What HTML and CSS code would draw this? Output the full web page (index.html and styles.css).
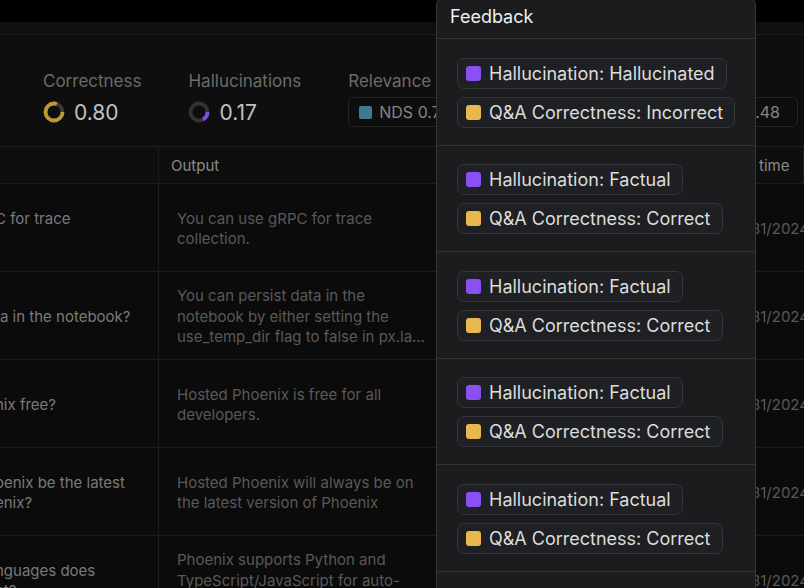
FILE: index.html
```html
<!DOCTYPE html>
<html lang="en">
<head>
<meta charset="utf-8">
<title>Traces - Feedback</title>
<link rel="stylesheet" href="styles.css">
</head>
<body>
<div class="app">
  <div class="topbar"></div>
  <div class="subbar"></div>

  <div class="metrics">
    <div class="metric">
      <div class="metric-label">Correctness</div>
      <div class="metric-value">
        <svg class="donut" width="22" height="22" viewBox="0 0 22 22">
          <circle cx="11" cy="11" r="8.5" fill="none" stroke="#3a3a3a" stroke-width="3.8"/>
          <circle cx="11" cy="11" r="8.5" fill="none" stroke="#bf982f" stroke-width="3.8" stroke-dasharray="42.7 53.4"/>
        </svg>
        <span>0.80</span>
      </div>
    </div>
    <div class="metric">
      <div class="metric-label">Hallucinations</div>
      <div class="metric-value">
        <svg class="donut" width="22" height="22" viewBox="0 0 22 22">
          <circle cx="11" cy="11" r="8.5" fill="none" stroke="#333333" stroke-width="3.8"/>
          <circle cx="11" cy="11" r="8.5" fill="none" stroke="#7d4fdc" stroke-width="3.8" stroke-dasharray="9.1 53.4"/>
        </svg>
        <span>0.17</span>
      </div>
    </div>
    <div class="metric grow">
      <div class="metric-label">Relevance</div>
      <div class="metric-value badges">
        <div class="stat"><span class="sq"></span>NDS 0.72</div>
        <div class="stat"><span class="sq"></span>Precision 0.48</div>
      </div>
    </div>
  </div>

  <div class="table">
    <div class="row head">
      <div class="cell q-head"></div>
      <div class="cell">Output</div>
      <div class="cell">Feedback</div>
      <div class="cell">Start time</div>
    </div>
    <div class="row">
      <div class="cell q"><div class="frag">C for trace<br>&nbsp;</div></div>
      <div class="cell"><div class="out">You can use gRPC for trace collection.</div></div>
      <div class="cell"></div>
      <div class="cell date">05/31/2024, 10:12 AM</div>
    </div>
    <div class="row">
      <div class="cell q"><div class="frag">ta in the notebook?</div></div>
      <div class="cell">
        <div class="lines">
          <div>You can persist data in the</div>
          <div>notebook by either setting the</div>
          <div class="clip">use_temp_dir flag to false in px.launch_app</div>
        </div>
      </div>
      <div class="cell"></div>
      <div class="cell date">05/31/2024, 10:12 AM</div>
    </div>
    <div class="row">
      <div class="cell q"><div class="frag">nix free?</div></div>
      <div class="cell"><div class="out">Hosted Phoenix is free for all developers.</div></div>
      <div class="cell"></div>
      <div class="cell date">05/31/2024, 10:12 AM</div>
    </div>
    <div class="row">
      <div class="cell q"><div class="frag">oenix be the latest<br>enix?</div></div>
      <div class="cell"><div class="out">Hosted Phoenix will always be on the latest version of Phoenix</div></div>
      <div class="cell"></div>
      <div class="cell date">05/31/2024, 10:12 AM</div>
    </div>
    <div class="row">
      <div class="cell q"><div class="frag">nguages does<br>nt?</div></div>
      <div class="cell"><div class="out">Phoenix supports Python and TypeScript/JavaScript for auto-instrumentation.</div></div>
      <div class="cell"></div>
      <div class="cell date">05/31/2024, 10:12 AM</div>
    </div>
  </div>

  <div class="feedback">
    <div class="fb-head">Feedback</div>
    <div class="fb-section">
      <div class="fb-badge"><span class="sw purple"></span>Hallucination: Hallucinated</div>
      <div class="fb-badge"><span class="sw yellow"></span>Q&amp;A Correctness: Incorrect</div>
    </div>
    <div class="fb-section">
      <div class="fb-badge"><span class="sw purple"></span>Hallucination: Factual</div>
      <div class="fb-badge"><span class="sw yellow"></span>Q&amp;A Correctness: Correct</div>
    </div>
    <div class="fb-section">
      <div class="fb-badge"><span class="sw purple"></span>Hallucination: Factual</div>
      <div class="fb-badge"><span class="sw yellow"></span>Q&amp;A Correctness: Correct</div>
    </div>
    <div class="fb-section">
      <div class="fb-badge"><span class="sw purple"></span>Hallucination: Factual</div>
      <div class="fb-badge"><span class="sw yellow"></span>Q&amp;A Correctness: Correct</div>
    </div>
    <div class="fb-section">
      <div class="fb-badge"><span class="sw purple"></span>Hallucination: Factual</div>
      <div class="fb-badge"><span class="sw yellow"></span>Q&amp;A Correctness: Correct</div>
    </div>
    <div class="fb-section">
      <div class="fb-badge"><span class="sw purple"></span>Hallucination: Factual</div>
      <div class="fb-badge"><span class="sw yellow"></span>Q&amp;A Correctness: Correct</div>
    </div>
  </div>
</div>
</body>
</html>
```

FILE: styles.css
```css
* { box-sizing: border-box; }

html, body {
  margin: 0;
  padding: 0;
}

body {
  background: #0c0c0c;
  font-family: Inter, "Noto Sans", "Liberation Sans", sans-serif;
  overflow: hidden;
}

.app {
  position: relative;
  width: 804px;
  height: 588px;
  overflow: hidden;
}

.topbar {
  height: 22px;
  background: #000;
}

.subbar {
  height: 13px;
  background: #0f0f0f;
  border-bottom: 1px solid #1c1c1c;
}

/* metrics strip */
.metrics {
  height: 112px;
  display: flex;
  gap: 47px;
  padding: 36px 6px 0 43px;
  background: #0e0e0e;
  border-bottom: 1px solid #1f1f1f;
}

.metric {
  display: flex;
  flex-direction: column;
  gap: 6px;
}

.metric.grow { flex: 1; }

.metric-label {
  font-size: 17px;
  line-height: 20px;
  color: #6b6b6b;
}

.metric-value {
  display: flex;
  align-items: center;
  gap: 9px;
  height: 30px;
  font-size: 21px;
  color: #c0c0c0;
}

.donut { display: block; }

.badges { gap: 0; }
.badges .stat:last-child { margin-left: auto; }

.stat {
  display: flex;
  align-items: center;
  gap: 7px;
  height: 30px;
  padding: 0 17px 0 10px;
  border: 1px solid #242424;
  border-radius: 6px;
  font-size: 16px;
  color: #858585;
}

.stat .sq {
  width: 13px;
  height: 13px;
  border-radius: 2px;
  background: #3e7b93;
}

/* table */
.table { background: #0b0b0b; }

.row {
  display: grid;
  grid-template-columns: 159px 286px 264px 1fr;
  height: 88px;
  border-bottom: 1px solid #1c1c1c;
}

.row.head {
  height: 37px;
  background: #0e0e0e;
}

.cell {
  display: flex;
  align-items: center;
  padding: 3px 18px 0;
  border-right: 1px solid #1c1c1c;
  font-size: 15px;
  line-height: 20.5px;
  color: #595959;
  overflow: hidden;
  min-width: 0;
}

.head .cell {
  padding: 2px 12px 0;
  color: #8a8a8a;
}

.cell.q {
  padding: 3px 0 0;
  color: #7a7a7a;
}

.frag {
  margin-left: -5px;
  white-space: nowrap;
}

.out {
  display: -webkit-box;
  -webkit-line-clamp: 3;
  -webkit-box-orient: vertical;
  overflow: hidden;
}

.lines {
  min-width: 0;
  width: 100%;
}

.lines .clip {
  white-space: nowrap;
  overflow: hidden;
  text-overflow: ellipsis;
}

.cell.date {
  white-space: nowrap;
  border-right: none;
}

/* feedback popover */
.feedback {
  position: absolute;
  left: 436px;
  top: -3px;
  width: 320px;
  height: 620px;
  background: #1c1c1e;
  border: 1px solid #37373a;
  border-radius: 8px;
  overflow: hidden;
}

.fb-head {
  height: 41px;
  padding: 8px 13px 0;
  font-size: 18px;
  line-height: 22px;
  color: #efefef;
  border-bottom: 1px solid #333336;
}

.fb-section {
  display: flex;
  flex-direction: column;
  align-items: flex-start;
  gap: 8px;
  padding: 18.5px 20px 17px;
  border-bottom: 1px solid #333336;
}

.fb-badge {
  display: flex;
  align-items: center;
  gap: 8px;
  height: 31px;
  padding: 0 11px 0 8px;
  background: #1f2023;
  border: 1px solid #343538;
  border-radius: 7px;
  font-size: 18px;
  color: #dcdcdc;
  white-space: nowrap;
}

.sw {
  width: 15px;
  height: 15px;
  border-radius: 3px;
}

.sw.purple { background: #8b4ff6; }
.sw.yellow { background: #e8b84c; }
```
